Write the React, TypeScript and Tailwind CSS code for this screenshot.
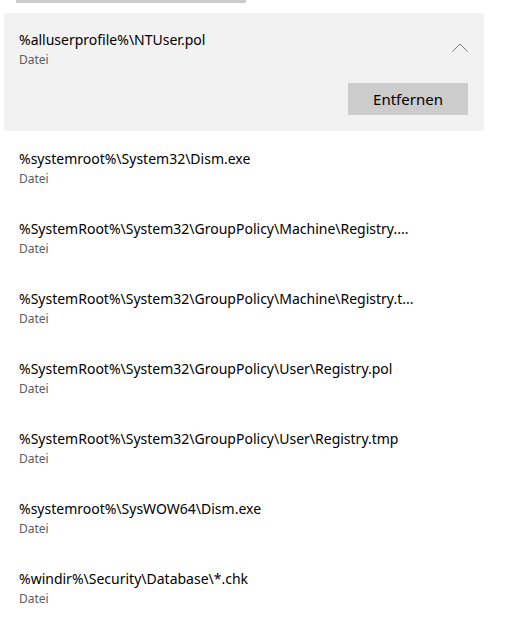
import { useState } from "react";

type Entry = {
  path: string;
};

const entries: Entry[] = [
  { path: "%systemroot%\\System32\\Dism.exe" },
  { path: "%SystemRoot%\\System32\\GroupPolicy\\Machine\\Registry...." },
  { path: "%SystemRoot%\\System32\\GroupPolicy\\Machine\\Registry.t..." },
  { path: "%SystemRoot%\\System32\\GroupPolicy\\User\\Registry.pol" },
  { path: "%SystemRoot%\\System32\\GroupPolicy\\User\\Registry.tmp" },
  { path: "%systemroot%\\SysWOW64\\Dism.exe" },
  { path: "%windir%\\Security\\Database\\*.chk" },
];

function ChevronUp() {
  return (
    <svg width="16" height="9" viewBox="0 0 16 9" fill="none">
      <path d="M0.5 8.5 L8 1 L15.5 8.5" stroke="#7a7a7a" strokeWidth="1" />
    </svg>
  );
}

function EntryText({ path }: { path: string }) {
  return (
    <div className="flex flex-col gap-[2px]">
      <span className="text-[14px] leading-[20px] text-black whitespace-nowrap">
        {path}
      </span>
      <span className="text-[12px] leading-[16px] text-[#5c5c5c]">Datei</span>
    </div>
  );
}

export default function App() {
  const [open, setOpen] = useState(true);

  return (
    <div
      className="w-[508px] h-[619px] overflow-hidden bg-white"
      style={{ fontFamily: '"Noto Sans", "Open Sans", sans-serif' }}
    >
      <div className="ml-4 w-[230px] h-[3px] bg-[#cccccc]" />

      <div className="mt-[10px] ml-1 w-[480px] bg-[#f2f2f2] pt-[17px] pb-4 pl-[15px] pr-4">
        <div className="flex items-start justify-between">
          <EntryText path="%alluserprofile%\NTUser.pol" />
          <button
            type="button"
            className="mt-[13px]"
            onClick={() => setOpen(!open)}
          >
            <ChevronUp />
          </button>
        </div>
        <div className="flex justify-end mt-[15px]">
          <button
            type="button"
            className="w-[120px] h-[32px] bg-[#cccccc] text-[15px] text-black"
          >
            Entfernen
          </button>
        </div>
      </div>

      <div className="flex flex-col">
        {entries.map((entry) => (
          <div key={entry.path} className="h-[70px] pt-[18px] pl-[19px]">
            <EntryText path={entry.path} />
          </div>
        ))}
      </div>
    </div>
  );
}
